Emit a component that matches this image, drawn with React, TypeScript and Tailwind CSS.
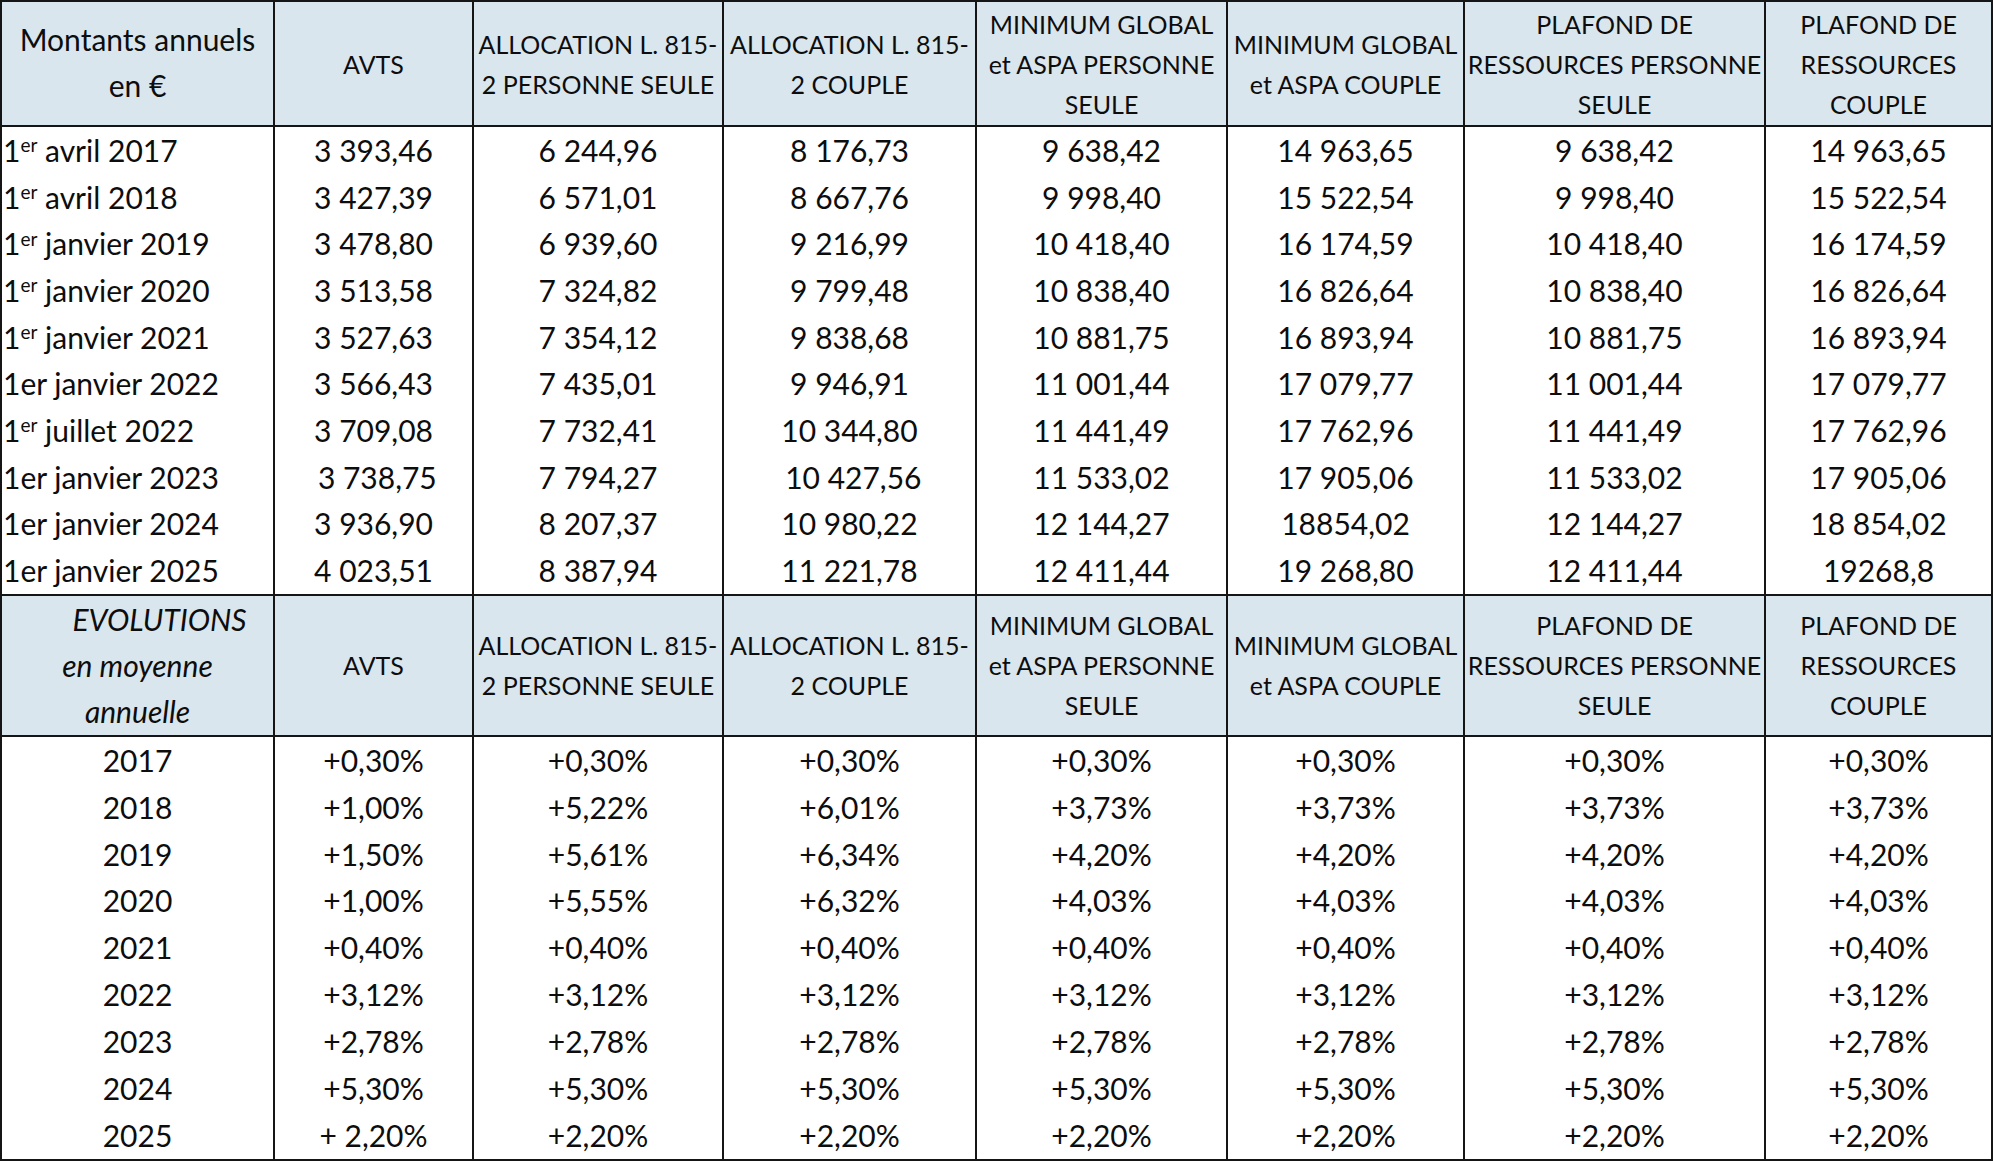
import React from "react";

const COLS = "grid grid-cols-[273px_199px_250px_253px_251px_237px_301px_225px]";

const headers: string[][] = [
  ["AVTS"],
  ["ALLOCATION L. 815-", "2 PERSONNE SEULE"],
  ["ALLOCATION L. 815-", "2 COUPLE"],
  ["MINIMUM GLOBAL", "et ASPA PERSONNE", "SEULE"],
  ["MINIMUM GLOBAL", "et ASPA COUPLE"],
  ["PLAFOND DE", "RESSOURCES PERSONNE", "SEULE"],
  ["PLAFOND DE", "RESSOURCES", "COUPLE"],
];

type Label = { pre: string; sup: boolean; rest: string };

const amounts: { label: Label; vals: string[] }[] = [
  { label: { pre: "1", sup: true, rest: " avril 2017" }, vals: ["3 393,46", "6 244,96", "8 176,73", "9 638,42", "14 963,65", "9 638,42", "14 963,65"] },
  { label: { pre: "1", sup: true, rest: " avril 2018" }, vals: ["3 427,39", "6 571,01", "8 667,76", "9 998,40", "15 522,54", "9 998,40", "15 522,54"] },
  { label: { pre: "1", sup: true, rest: " janvier 2019" }, vals: ["3 478,80", "6 939,60", "9 216,99", "10 418,40", "16 174,59", "10 418,40", "16 174,59"] },
  { label: { pre: "1", sup: true, rest: " janvier 2020" }, vals: ["3 513,58", "7 324,82", "9 799,48", "10 838,40", "16 826,64", "10 838,40", "16 826,64"] },
  { label: { pre: "1", sup: true, rest: " janvier 2021" }, vals: ["3 527,63", "7 354,12", "9 838,68", "10 881,75", "16 893,94", "10 881,75", "16 893,94"] },
  { label: { pre: "1er janvier 2022", sup: false, rest: "" }, vals: ["3 566,43", "7 435,01", "9 946,91", "11 001,44", "17 079,77", "11 001,44", "17 079,77"] },
  { label: { pre: "1", sup: true, rest: " juillet 2022" }, vals: ["3 709,08", "7 732,41", "10 344,80", "11 441,49", "17 762,96", "11 441,49", "17 762,96"] },
  { label: { pre: "1er janvier 2023", sup: false, rest: "" }, vals: ["\u00a03 738,75", "7 794,27", "\u00a010 427,56", "11 533,02", "17 905,06", "11 533,02", "17 905,06"] },
  { label: { pre: "1er janvier 2024", sup: false, rest: "" }, vals: ["3 936,90", "8 207,37", "10 980,22", "12 144,27", "18854,02", "12 144,27", "18 854,02"] },
  { label: { pre: "1er janvier 2025", sup: false, rest: "" }, vals: ["4 023,51", "8 387,94", "11 221,78", "12 411,44", "19 268,80", "12 411,44", "19268,8"] },
];

const same = (v: string) => [v, v, v, v, v, v, v];

const evolutions: { year: string; vals: string[] }[] = [
  { year: "2017", vals: same("+0,30%") },
  { year: "2018", vals: ["+1,00%", "+5,22%", "+6,01%", "+3,73%", "+3,73%", "+3,73%", "+3,73%"] },
  { year: "2019", vals: ["+1,50%", "+5,61%", "+6,34%", "+4,20%", "+4,20%", "+4,20%", "+4,20%"] },
  { year: "2020", vals: ["+1,00%", "+5,55%", "+6,32%", "+4,03%", "+4,03%", "+4,03%", "+4,03%"] },
  { year: "2021", vals: same("+0,40%") },
  { year: "2022", vals: same("+3,12%") },
  { year: "2023", vals: same("+2,78%") },
  { year: "2024", vals: same("+5,30%") },
  { year: "2025", vals: ["+ 2,20%", "+2,20%", "+2,20%", "+2,20%", "+2,20%", "+2,20%", "+2,20%"] },
];

function HeaderCells() {
  return (
    <>
      {headers.map((lines, i) => (
        <div
          key={i}
          className={
            "flex flex-col items-center justify-center text-center text-[25px] leading-[40px] whitespace-nowrap" +
            (i < headers.length - 1 ? " border-r-2 border-[#151515]" : "")
          }
        >
          {lines.map((l, j) => (
            <div key={j}>{l}</div>
          ))}
        </div>
      ))}
    </>
  );
}

export default function App() {
  return (
    <div className="w-[1993px] h-[1164px] bg-white" style={{ fontFamily: "Lato, 'Noto Sans', sans-serif" }}>
      <div className="w-[1993px] border-2 border-[#151515] text-[#0d0d0d] bg-white">
        {/* Header 1 */}
        <div className={COLS + " h-[125px] bg-[#dae6ee] border-b-2 border-[#151515]"}>
          <div className="flex flex-col items-center justify-center pb-[4px] text-center text-[30px] leading-[46px] border-r-2 border-[#151515]">
            <div>Montants annuels</div>
            <div>en €</div>
          </div>
          <HeaderCells />
        </div>

        {/* Amount rows */}
        <div className="border-b-2 border-[#151515]">
          {amounts.map((r, i) => (
            <div key={i} className={COLS + " h-[46.7px] text-[30px]"}>
              <div className="flex items-center pl-[1px] whitespace-nowrap border-r-2 border-[#151515]">
                {r.label.sup ? (
                  <span>
                    {r.label.pre}
                    <sup className="text-[19px]">er</sup>
                    {r.label.rest}
                  </span>
                ) : (
                  <span>{r.label.pre}</span>
                )}
              </div>
              {r.vals.map((v, j) => (
                <div
                  key={j}
                  className={
                    "flex items-center justify-center whitespace-pre" +
                    (j < r.vals.length - 1 ? " border-r-2 border-[#151515]" : "")
                  }
                >
                  {v}
                </div>
              ))}
            </div>
          ))}
        </div>

        {/* Header 2 */}
        <div className={COLS + " h-[141px] bg-[#dae6ee] border-b-2 border-[#151515]"}>
          <div className="flex flex-col items-center justify-center text-center text-[30px] leading-[46px] italic border-r-2 border-[#151515]">
            <div className="pl-[44px]">EVOLUTIONS</div>
            <div>en moyenne</div>
            <div>annuelle</div>
          </div>
          <HeaderCells />
        </div>

        {/* Evolution rows */}
        <div>
          {evolutions.map((r, i) => (
            <div key={i} className={COLS + " h-[46.9px] text-[30px]"}>
              <div className="flex items-center justify-center border-r-2 border-[#151515]">{r.year}</div>
              {r.vals.map((v, j) => (
                <div
                  key={j}
                  className={
                    "flex items-center justify-center whitespace-pre" +
                    (j < r.vals.length - 1 ? " border-r-2 border-[#151515]" : "")
                  }
                >
                  {v}
                </div>
              ))}
            </div>
          ))}
        </div>
      </div>
    </div>
  );
}
